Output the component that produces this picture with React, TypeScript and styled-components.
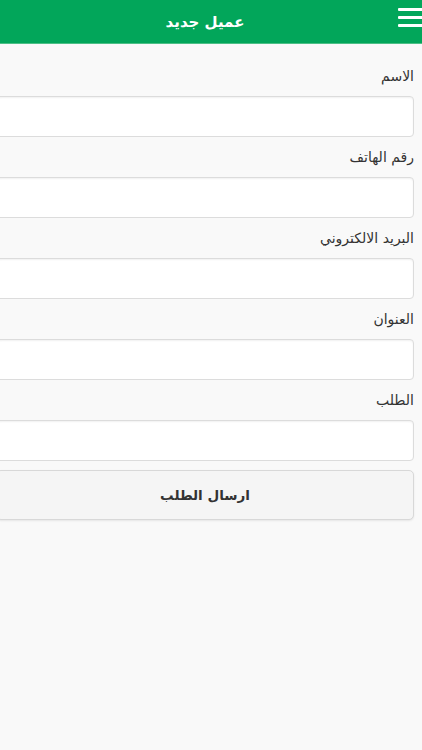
import React from "react";
import styled, { createGlobalStyle } from "styled-components";

const Global = createGlobalStyle`
  html, body { margin: 0; padding: 0; background: #f9f9f9; overflow: hidden; }
  body { font-family: "DejaVu Sans", "Noto Sans", sans-serif; }
`;

const Page = styled.div`
  direction: rtl;
  width: 442px;
  margin-left: -16px;
  min-height: 750px;
  background: #f9f9f9;
`;

const Header = styled.header`
  position: relative;
  height: 43px;
  background: #02a65a;
  border-bottom: 1px solid #4dbf86;
  display: flex;
  align-items: center;
  justify-content: center;
`;

const Title = styled.h1`
  margin: 0;
  color: #fff;
  font-size: 15px;
  font-weight: bold;
`;

const MenuButton = styled.button`
  position: absolute;
  right: 0;
  top: 8px;
  width: 28px;
  height: 19px;
  padding: 0;
  border: none;
  background: transparent;
  display: flex;
  flex-direction: column;
  justify-content: space-between;
  span {
    display: block;
    height: 3px;
    background: #fff;
    border-radius: 1px;
  }
`;

const Form = styled.form`
  padding: 21px 12px 0;
  display: flex;
  flex-direction: column;
`;

const Group = styled.div`
  display: flex;
  flex-direction: column;
  margin-bottom: 9px;
`;

const Label = styled.label`
  font-size: 14px;
  line-height: 22px;
  color: #333;
  margin-bottom: 9px;
`;

const Input = styled.input`
  box-sizing: border-box;
  height: 41px;
  width: 100%;
  background: #fff;
  border: 1px solid #dcdcdc;
  border-radius: 4px;
  box-shadow: inset 0 1px 2px rgba(0, 0, 0, 0.06);
  outline: none;
`;

const Submit = styled.button`
  box-sizing: border-box;
  height: 50px;
  width: 100%;
  background: #f5f5f5;
  border: 1px solid #d8d8d8;
  border-radius: 5px;
  box-shadow: 0 1px 2px rgba(0, 0, 0, 0.08);
  font-family: "DejaVu Sans", sans-serif;
  font-size: 13.5px;
  font-weight: bold;
  color: #333;
`;

const fields = ["الاسم", "رقم الهاتف", "البريد الالكتروني", "العنوان", "الطلب"];

export default function App() {
  return (
    <Page>
      <Global />
      <Header>
        <Title>عميل جديد</Title>
        <MenuButton type="button" aria-label="menu">
          <span />
          <span />
          <span />
        </MenuButton>
      </Header>
      <Form onSubmit={(e) => e.preventDefault()}>
        {fields.map((f) => (
          <Group key={f}>
            <Label>{f}</Label>
            <Input type="text" />
          </Group>
        ))}
        <Submit type="submit">ارسال الطلب</Submit>
      </Form>
    </Page>
  );
}
